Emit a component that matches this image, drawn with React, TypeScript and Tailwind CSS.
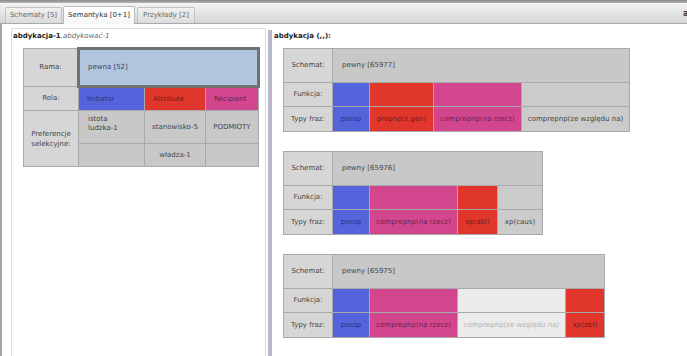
const BLUE = 'bg-[#5464da]'
const RED = 'bg-[#e0362c]'
const PINK = 'bg-[#d2468e]'
const GRAY = 'bg-[#cbcbcb]'

type Cell = { text?: string; color: string; w: number; faded?: boolean }

interface SchemaTableProps {
  schema: string
  cells: Cell[]
}

function SchemaTable({ schema, cells }: SchemaTableProps) {
  const total = 49 + cells.reduce((s, c) => s + c.w, 0)
  return (
    <table className="table-fixed border-collapse text-[7px] text-[#444]" style={{ width: total }}>
      <colgroup>
        <col style={{ width: 49 }} />
        {cells.map((c, i) => (
          <col key={i} style={{ width: c.w }} />
        ))}
      </colgroup>
      <tbody>
        <tr className="h-[34px]">
          <td className="border border-[#a9a9a9] bg-[#d6d6d6] text-center">Schemat:</td>
          <td colSpan={cells.length} className="border border-[#a9a9a9] bg-[#c8c8c8] pl-[9px]">
            {schema}
          </td>
        </tr>
        <tr className="h-[24px]">
          <td className="border border-[#a9a9a9] bg-[#d6d6d6] text-center">Funkcja:</td>
          {cells.map((c, i) => (
            <td key={i} className={`border border-[#a9a9a9] ${c.color}`} />
          ))}
        </tr>
        <tr className="h-[25px]">
          <td className="border border-[#a9a9a9] bg-[#d6d6d6] text-center">Typy fraz:</td>
          {cells.map((c, i) => (
            <td
              key={i}
              className={`border border-[#a9a9a9] text-center whitespace-nowrap ${c.color} ${
                c.faded ? 'text-[#b4b4b4]' : c.color === GRAY ? 'text-[#444]' : 'text-black/55'
              }`}
            >
              {c.text}
            </td>
          ))}
        </tr>
      </tbody>
    </table>
  )
}

export default function App() {
  return (
    <div
      className="w-[687px] h-[356px] overflow-hidden bg-white flex flex-col"
      style={{ fontFamily: '"DejaVu Sans", Verdana, sans-serif' }}
    >
      {/* top strip */}
      <div className="h-[4px] shrink-0 bg-linear-to-b from-[#8a8a8a] to-[#b4b4b4] border-b border-[#f4f4f4]" />

      {/* tab bar */}
      <div className="h-[20px] shrink-0 bg-linear-to-b from-[#f2f2f2] to-[#d6d6d6] border-b border-[#a9a9a9] flex items-end pl-[5px] gap-[1px] text-[7px]">
        <div className="w-[57px] h-[16px] border border-b-0 border-[#c2c2c2] rounded-t-[2px] bg-linear-to-b from-[#f0f0f0] to-[#dcdcdc] flex items-center justify-center text-[#666]">
          Schematy [5]
        </div>
        <div className="w-[72px] h-[18px] -mb-px border border-b-0 border-[#b8b8b8] rounded-t-[2px] bg-linear-to-b from-[#ffffff] to-[#f6f6f6] flex items-center justify-center text-[#333]">
          Semantyka [0+1]
        </div>
        <div className="ml-[1px] w-[58px] h-[16px] border border-b-0 border-[#c2c2c2] rounded-t-[2px] bg-linear-to-b from-[#f0f0f0] to-[#dcdcdc] flex items-center justify-center text-[#666]">
          Przykłady [2]
        </div>
        <div className="flex-1" />
        <div className="w-[4px] self-center overflow-hidden font-bold text-[#333] text-[8px]">a</div>
      </div>

      {/* main */}
      <div className="flex flex-1 border-l-2 border-[#a6a6a6]">
        {/* left panel */}
        <div className="w-[266px] shrink-0 pt-[4px] pl-[9px] pr-[2px]">
          <div className="h-full border border-b-0 border-[#dcdcdc] pt-[2px] pl-[1px]">
            <div className="text-[7px] text-[#222] leading-[10px]">
              <span className="font-bold">abdykacja-1</span>
              <span className="italic text-[#666]">,abdykować-1</span>
            </div>
            <table className="mt-[6px] ml-[10px] w-[235px] table-fixed border-collapse text-[7px] text-[#444]">
              <colgroup>
                <col className="w-[55px]" />
                <col className="w-[66px]" />
                <col className="w-[61px]" />
                <col className="w-[53px]" />
              </colgroup>
              <tbody>
                <tr className="h-[38px]">
                  <td className="border border-[#a9a9a9] bg-[#d6d6d6] text-center">Rama:</td>
                  <td colSpan={3} className="border-[3px] border-[#717171] bg-[#b1c5df] pl-[8px] text-[#445]">
                    pewna [52]
                  </td>
                </tr>
                <tr className="h-[24px]">
                  <td className="border border-[#a9a9a9] bg-[#d6d6d6] text-center">Rola:</td>
                  <td className={`border border-[#a9a9a9] ${BLUE} pl-[8px] text-black/55`}>Initiator</td>
                  <td className={`border border-[#a9a9a9] ${RED} pl-[8px] text-black/55`}>Attribute</td>
                  <td className={`border border-[#a9a9a9] ${PINK} pl-[8px] text-black/55`}>Recipient</td>
                </tr>
                <tr className="h-[33px]">
                  <td rowSpan={2} className="border border-[#a9a9a9] bg-[#d6d6d6] text-center leading-[10px]">
                    Preferencje
                    <br />
                    selekcyjne:
                  </td>
                  <td className="border border-[#a9a9a9] bg-[#c8c8c8] pl-[9px] align-top pt-[4px] leading-[9px]">
                    istota
                    <br />
                    ludzka-1
                  </td>
                  <td className="border border-[#a9a9a9] bg-[#c8c8c8] text-center">stanowisko-5</td>
                  <td className="border border-[#a9a9a9] bg-[#c8c8c8] text-center">PODMIOTY</td>
                </tr>
                <tr className="h-[23px]">
                  <td className="border border-[#a9a9a9] bg-[#c8c8c8]" />
                  <td className="border border-[#a9a9a9] bg-[#c8c8c8] text-center">władza-1</td>
                  <td className="border border-[#a9a9a9] bg-[#c8c8c8]" />
                </tr>
              </tbody>
            </table>
          </div>
        </div>

        {/* divider */}
        <div className="w-[4px] shrink-0 mt-[6px] bg-[#b8b8cb]" />

        {/* right panel */}
        <div className="flex-1 pl-[2px] pt-[7px]">
          <div className="text-[7px] font-bold text-[#222] leading-[10px]">abdykacja (,,):</div>
          <div className="ml-[9px] mt-[7px] flex flex-col gap-[19px]">
            <SchemaTable
              schema="pewny [65977]"
              cells={[
                { text: 'possp', color: BLUE, w: 37 },
                { text: 'prepnp(z,gen)', color: RED, w: 64 },
                { text: 'comprepnp(na rzecz)', color: PINK, w: 88 },
                { text: 'comprepnp(ze względu na)', color: GRAY, w: 108 },
              ]}
            />
            <SchemaTable
              schema="pewny [65976]"
              cells={[
                { text: 'possp', color: BLUE, w: 37 },
                { text: 'comprepnp(na rzecz)', color: PINK, w: 88 },
                { text: 'xp(abl)', color: RED, w: 40 },
                { text: 'xp(caus)', color: GRAY, w: 45 },
              ]}
            />
            <SchemaTable
              schema="pewny [65975]"
              cells={[
                { text: 'possp', color: BLUE, w: 37 },
                { text: 'comprepnp(na rzecz)', color: PINK, w: 88 },
                { text: 'comprepnp(ze względu na)', color: 'bg-[#ebebeb]', w: 108, faded: true },
                { text: 'xp(abl)', color: RED, w: 39 },
              ]}
            />
            {/* next schema, only its top edge shows */}
            <div className="w-[291px] h-[20px] shrink-0 border-t border-[#a9a9a9]" />
          </div>
        </div>
      </div>
    </div>
  )
}
